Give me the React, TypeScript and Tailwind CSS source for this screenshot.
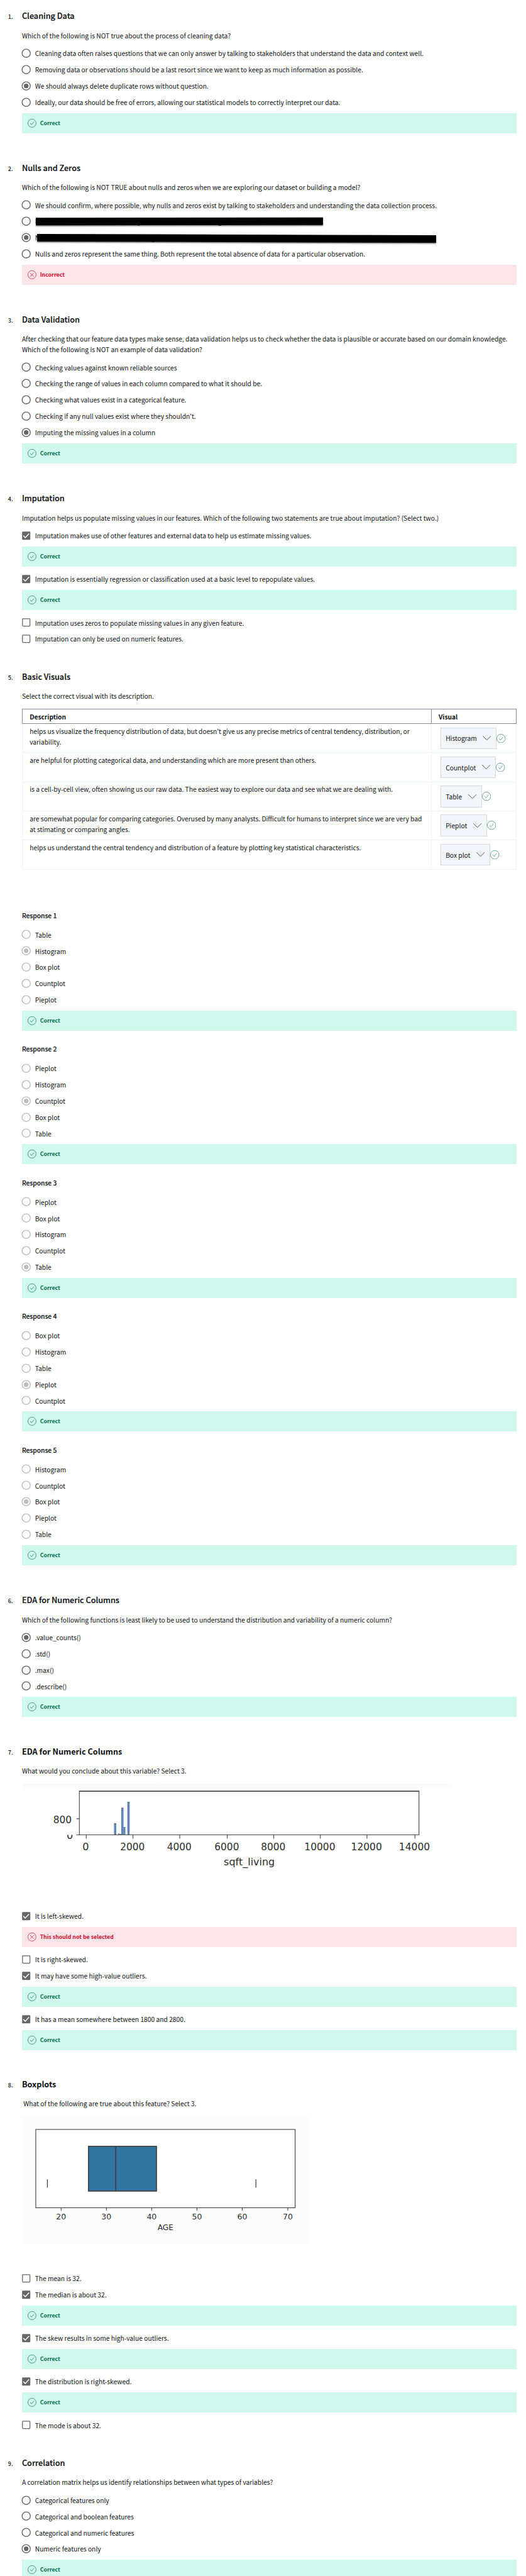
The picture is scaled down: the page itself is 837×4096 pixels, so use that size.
import type { ReactNode } from "react";

type Choice = { label: ReactNode; on?: boolean; verdict?: "ok" | string };

function Radio({ on, muted }: { on?: boolean; muted?: boolean }) {
  const color = muted ? "#bdbdbd" : "#666666";
  return (
    <svg viewBox="0 0 30 30" className="-ml-[1.3px] h-[15.4px] w-[15.4px] shrink-0">
      <circle cx="15" cy="15" r="12.7" fill="none" stroke={color} strokeWidth="2.7" />
      {on && <circle cx="15" cy="15" r="7.1" fill={color} />}
    </svg>
  );
}

function Checkbox({ on }: { on?: boolean }) {
  return (
    <svg viewBox="0 0 30 30" className="-ml-[1.3px] h-[15.4px] w-[15.4px] shrink-0">
      {on ? (
        <>
          <rect x="2.3" y="2.3" width="25.4" height="25.4" rx="2.5" fill="#666666" />
          <path d="M6.2 15.2 12 21.2 23.8 8.6" fill="none" stroke="#ffffff" strokeWidth="2.7" />
        </>
      ) : (
        <rect x="3.5" y="3.5" width="23" height="23" rx="1.6" fill="none" stroke="#666666" strokeWidth="2.5" />
      )}
    </svg>
  );
}

function RoundCheck({ className }: { className: string }) {
  return (
    <svg viewBox="0 0 28 28" className={className} fill="none" stroke="currentColor" strokeWidth="1.4">
      <circle cx="14" cy="14" r="13.2" />
      <path d="M8.3 14.1 12.4 18.8 20.2 9.6" />
    </svg>
  );
}

function RoundCross({ className }: { className: string }) {
  return (
    <svg viewBox="0 0 28 28" className={className} fill="none" stroke="currentColor" strokeWidth="1.4">
      <circle cx="14" cy="14" r="13.2" />
      <path d="M8 8 20 20M20 8 8 20" />
    </svg>
  );
}

function Banner({ kind }: { kind: string }) {
  const ok = kind === "ok";
  return (
    <div
      className={
        ok
          ? "mt-[4.4px] flex h-[31.8px] items-center bg-[#cff9ec] pl-[9.1px] text-[#087051]"
          : "mt-[4.4px] flex h-[31.8px] items-center bg-[#fbe5e8] pl-[9.1px] text-[#d30c2e]"
      }
    >
      {ok ? <RoundCheck className="h-[13.8px] w-[13.8px]" /> : <RoundCross className="h-[13.8px] w-[13.8px]" />}
      <span className="pl-[5.8px] text-[8.8px] font-bold leading-[14px]">{ok ? "Correct" : kind}</span>
    </div>
  );
}

function Choices({ items, box, muted }: { items: Choice[]; box?: boolean; muted?: boolean }) {
  return (
    <div>
      {items.map((c, i) => (
        <div key={i}>
          <div className="flex h-[25.85px] items-center">
            {box ? <Checkbox on={c.on} /> : <Radio on={c.on} muted={muted} />}
            <div className="pl-[6.7px] leading-[17px]">{c.label}</div>
          </div>
          {c.verdict && (
            <div className={i < items.length - 1 ? "pb-[7.1px]" : ""}>
              <Banner kind={c.verdict} />
            </div>
          )}
        </div>
      ))}
    </div>
  );
}

function Section({
  n,
  title,
  prompt,
  height,
  bold,
  inset,
  children,
}: {
  n: number;
  title: string;
  prompt: ReactNode;
  height: string;
  bold?: boolean;
  inset?: boolean;
  children: ReactNode;
}) {
  return (
    <section className={`${height} pt-[12.4px]`}>
      <div className="flex items-baseline leading-[26px]">
        <span className="w-[34.94px] shrink-0 pl-[12.8px] text-[9px] font-medium leading-none">{n}.</span>
        <h2
          className={
            bold ? "text-[12.67px] font-bold" : "text-[12.67px] font-medium [-webkit-text-stroke:0.2px_#0f1114]"
          }
        >
          {title}
        </h2>
      </div>
      <div className="ml-[34.94px] w-[787.1px]">
        <p className={inset ? "mt-[9.4px] pl-[2.3px] leading-[17px]" : "mt-[9.4px] leading-[17px]"}>{prompt}</p>
        {children}
      </div>
    </section>
  );
}

function BarOne() {
  return (
    <div className="relative h-[17px] w-[460px]">
      <span className="absolute left-0 top-0">N</span>
      <span className="absolute left-[163.5px] top-0">y</span>
      <span className="absolute left-[291px] top-0">g</span>
      <div className="absolute left-[1.7px] top-[2.4px] h-[11.6px] w-[457px] -rotate-[0.05deg] bg-black shadow-[0_1.5px_2px_rgba(0,0,0,0.55)]" />
    </div>
  );
}

function BarTwo() {
  return (
    <div className="relative h-[17px] w-[640px]">
      <span className="absolute left-0 top-0">N</span>
      <span className="absolute left-[184.5px] top-0">g</span>
      <div className="absolute left-[2.9px] top-[3.7px] h-[11.6px] w-[635.3px] rotate-[0.2deg] bg-black shadow-[0_1.5px_2px_rgba(0,0,0,0.55)]" />
    </div>
  );
}

const rows: { text: string[]; pick: string }[] = [
  {
    text: [
      "helps us visualize the frequency distribution of data, but doesn’t give us any precise metrics of central tendency, distribution, or",
      "variability.",
    ],
    pick: "Histogram",
  },
  { text: ["are helpful for plotting categorical data, and understanding which are more present than others."], pick: "Countplot" },
  {
    text: ["is a cell-by-cell view, often showing us our raw data. The easiest way to explore our data and see what we are dealing with."],
    pick: "Table",
  },
  {
    text: [
      "are somewhat popular for comparing categories. Overused by many analysts. Difficult for humans to interpret since we are very bad",
      "at stimating or comparing angles.",
    ],
    pick: "Pieplot",
  },
  { text: ["helps us understand the central tendency and distribution of a feature by plotting key statistical characteristics."], pick: "Box plot" },
];

function VisualTable() {
  return (
    <div className="mt-[11.7px]">
      <div className="flex h-[24px] items-center border border-[#868c9b] text-[10.2px] font-bold leading-[17px]">
        <div className="w-[649.8px] pl-[11.3px]">Description</div>
        <div className="flex h-full flex-1 items-center border-l border-[#868c9b] pl-[11.3px]">Visual</div>
      </div>
      {rows.map((r) => (
        <div key={r.pick} className="flex h-[46.33px] border-x border-b border-[#eef2f9]">
          <div className="w-[649.8px] pl-[11.3px] pt-[2.7px] leading-[17.3px]">
            {r.text.map((t) => (
              <div key={t}>{t}</div>
            ))}
          </div>
          <div className="flex flex-1 items-center border-l border-[#eef2f9] pl-[13.8px]">
            <div className="flex h-[34.4px] items-center border border-[#d3dce6] bg-[#f2f5fa] pl-[7.6px] pr-[8px]">
              <span className="leading-[17px]">{r.pick}</span>
              <svg viewBox="0 0 26 14" className="ml-[9.4px] h-[7.2px] w-[13.4px]" fill="none" stroke="#1f2328" strokeWidth="1.4">
                <path d="M.5 .6 13 13 25.5 .6" />
              </svg>
            </div>
            <RoundCheck className="h-[14.4px] w-[14.4px] text-[#2b8a5e]" />
          </div>
        </div>
      ))}
    </div>
  );
}

const responses: { options: string[]; pick: string }[] = [
  { options: ["Table", "Histogram", "Box plot", "Countplot", "Pieplot"], pick: "Histogram" },
  { options: ["Pieplot", "Histogram", "Countplot", "Box plot", "Table"], pick: "Countplot" },
  { options: ["Pieplot", "Box plot", "Histogram", "Countplot", "Table"], pick: "Table" },
  { options: ["Box plot", "Histogram", "Table", "Pieplot", "Countplot"], pick: "Pieplot" },
  { options: ["Histogram", "Countplot", "Box plot", "Pieplot", "Table"], pick: "Box plot" },
];

const sqftTicks = [
  { x: 267, label: "0", w: 20 },
  { x: 411.8, label: "2000", w: 76 },
  { x: 556.4, label: "4000", w: 76 },
  { x: 703.8, label: "6000", w: 76 },
  { x: 847.7, label: "8000", w: 76 },
  { x: 992, label: "10000", w: 96 },
  { x: 1136.5, label: "12000", w: 96 },
  { x: 1285, label: "14000", w: 96 },
];

const sqftBars = [
  { x: 353, w: 7, y: 5645 },
  { x: 366, w: 3, y: 5676 },
  { x: 369, w: 6, y: 5678.5 },
  { x: 375.4, w: 7, y: 5597 },
  { x: 382.2, w: 6, y: 5657 },
  { x: 394.4, w: 7, y: 5579 },
];

function SqftChart() {
  return (
    <svg viewBox="68 5522 1532 384.4" className="mt-[11.8px] block h-[197.5px] w-[787.1px] font-['DejaVu_Sans',sans-serif]" fill="#2c2c2c">
      <defs>
        <linearGradient id="haze" x1="0" x2="0" y1="0" y2="1">
          <stop offset="0" stopColor="#f9f9f9" />
          <stop offset="1" stopColor="#ffffff" />
        </linearGradient>
        <clipPath id="lower">
          <rect x="190" y="5680.6" width="46" height="30" />
        </clipPath>
      </defs>
      <rect x="68" y="5522" width="1330" height="24" fill="url(#haze)" />
      {sqftBars.map((b) => (
        <g key={b.x}>
          <rect x={b.x} y={b.y} width={b.w} height={5680.6 - b.y} fill="#5f87b6" />
          <rect x={b.x} y={b.y} width={b.w} height="2" fill="#6b7480" />
        </g>
      ))}
      <g stroke="#474747" strokeWidth="2.2" fill="none">
        <path d="M245.7 5545.7V5680.7M1297.5 5545.7V5680.7M236 5680.7H1298.5M237 5630.7H245.7" />
        <path d="M244.6 5545.7H1298.6" strokeWidth="3.6" />
        {sqftTicks.map((t) => (
          <path key={t.x} d={`M${t.x} 5681V5692.5`} />
        ))}
      </g>
      <g fontSize="32.5" textAnchor="middle">
        {sqftTicks.map((t) => (
          <text key={t.x} x={t.x - 1.5} y="5727.5" textLength={t.w} lengthAdjust="spacingAndGlyphs">
            {t.label}
          </text>
        ))}
        <text x="193.5" y="5644" textLength="57" lengthAdjust="spacingAndGlyphs">
          800
        </text>
        <text x="216" y="5692.5" textLength="20" lengthAdjust="spacingAndGlyphs" clipPath="url(#lower)">
          0
        </text>
        <text x="772" y="5775.5" textLength="158" lengthAdjust="spacingAndGlyphs">
          sqft_living
        </text>
      </g>
    </svg>
  );
}

const ageTicks = [
  { x: 189, label: "20" },
  { x: 329.3, label: "30" },
  { x: 469.6, label: "40" },
  { x: 609.8, label: "50" },
  { x: 750, label: "60" },
  { x: 891.3, label: "70" },
];

function AgeChart() {
  return (
    <svg viewBox="68 6551 1532 477" className="mt-[11.5px] block h-[245px] w-[787.1px] font-['DejaVu_Sans',sans-serif]" fill="#2c2c2c">
      <rect x="68" y="6551" width="888" height="396" fill="#fcfcfc" />
      <rect x="110.5" y="6591.8" width="803.5" height="242.4" fill="#ffffff" stroke="#3c3c3c" strokeWidth="2.1" />
      <g stroke="#3f3f3f" strokeWidth="3.2">
        <rect x="273.8" y="6644" width="210.6" height="138.6" fill="#3274a1" />
        <path d="M358.4 6644V6782.6" />
        <path d="M146.5 6746.4V6772M792.5 6746.4V6772" strokeWidth="2.4" />
      </g>
      {ageTicks.map((t) => (
        <path key={t.x} d={`M${t.x} 6834V6843`} stroke="#3c3c3c" strokeWidth="2" />
      ))}
      <g fontSize="24.3" textAnchor="middle">
        {ageTicks.map((t) => (
          <text key={t.x} x={t.x} y="6870">
            {t.label}
          </text>
        ))}
        <text x="512.3" y="6902.5" fontSize="23.8">
          AGE
        </text>
      </g>
    </svg>
  );
}

export default function App() {
  return (
    <main className="h-[4096px] w-[837px] overflow-hidden whitespace-nowrap bg-white font-['Noto_Sans_CJK_KR','Noto_Sans',sans-serif] text-[10.26px] text-[#0f1114]">
      <Section n={1} title="Cleaning Data" height="h-[241.2px]" prompt="Which of the following is NOT true about the process of cleaning data?">
        <div className="mt-[7.2px]">
          <Choices
            items={[
              { label: "Cleaning data often raises questions that we can only answer by talking to stakeholders that understand the data and context well." },
              { label: "Removing data or observations should be a last resort since we want to keep as much information as possible." },
              { label: "We should always delete duplicate rows without question.", on: true },
              { label: "Ideally, our data should be free of errors, allowing our statistical models to correctly interpret our data.", verdict: "ok" },
            ]}
          />
        </div>
      </Section>

      <Section
        n={2}
        title="Nulls and Zeros"
        height="h-[241px]"
        prompt="Which of the following is NOT TRUE about nulls and zeros when we are exploring our dataset or building a model?"
      >
        <div className="mt-[7.2px]">
          <Choices
            items={[
              { label: "We should confirm, where possible, why nulls and zeros exist by talking to stakeholders and understanding the data collection process." },
              { label: <BarOne /> },
              { label: <BarTwo />, on: true },
              { label: "Nulls and zeros represent the same thing. Both represent the total absence of data for a particular observation.", verdict: "Incorrect" },
            ]}
          />
        </div>
      </Section>

      <Section
        n={3}
        title="Data Validation"
        height="h-[284.7px]"
        prompt={
          <>
            After checking that our feature data types make sense, data validation helps us to check whether the data is plausible or accurate based on our domain knowledge.
            <br />
            Which of the following is NOT an example of data validation?
          </>
        }
      >
        <div className="mt-[7.2px]">
          <Choices
            items={[
              { label: "Checking values against known reliable sources" },
              { label: "Checking the range of values in each column compared to what it should be." },
              { label: "Checking what values exist in a categorical feature." },
              { label: "Checking if any null values exist where they shouldn’t." },
              { label: "Imputing the missing values in a column", on: true, verdict: "ok" },
            ]}
          />
        </div>
      </Section>

      <Section
        n={4}
        title="Imputation"
        height="h-[283.7px]"
        prompt="Imputation helps us populate missing values in our features. Which of the following two statements are true about imputation? (Select two.)"
      >
        <div className="mt-[7.2px]">
          <Choices
            box
            items={[
              { label: "Imputation makes use of other features and external data to help us estimate missing values.", on: true, verdict: "ok" },
              { label: "Imputation is essentially regression or classification used at a basic level to repopulate values.", on: true, verdict: "ok" },
              { label: "Imputation uses zeros to populate missing values in any given feature." },
              { label: "Imputation can only be used on numeric features." },
            ]}
          />
        </div>
      </Section>

      <Section n={5} title="Basic Visuals" height="h-[1468.2px]" prompt="Select the correct visual with its description.">
        <VisualTable />
        <div className="mt-[65.3px]">
          {responses.map((r, i) => (
            <div key={i} className="h-[212.5px]">
              <h3 className="mb-[9.3px] h-[16px] font-medium leading-[16px] [-webkit-text-stroke:0.15px_#0f1114]">Response {i + 1}</h3>
              <Choices muted items={r.options.map((o, k) => ({ label: o, on: o === r.pick, verdict: k === 4 ? "ok" : undefined }))} />
            </div>
          ))}
        </div>
      </Section>

      <Section
        n={6}
        title="EDA for Numeric Columns"
        height="h-[240.9px]"
        prompt="Which of the following functions is least likely to be used to understand the distribution and variability of a numeric column?"
      >
        <div className="mt-[7.2px]">
          <Choices
            items={[{ label: ".value_counts()", on: true }, { label: ".std()" }, { label: ".max()" }, { label: ".describe()", verdict: "ok" }]}
          />
        </div>
      </Section>

      <Section n={7} title="EDA for Numeric Columns" bold height="h-[529px]" prompt="What would you conclude about this variable? Select 3.">
        <SqftChart />
        <Choices
          box
          items={[
            { label: "It is left-skewed.", on: true, verdict: "This should not be selected" },
            { label: "It is right-skewed." },
            { label: "It may have some high-value outliers.", on: true, verdict: "ok" },
            { label: "It has a mean somewhere between 1800 and 2800.", on: true, verdict: "ok" },
          ]}
        />
      </Section>

      <Section n={8} title="Boxplots" bold inset height="h-[601.8px]" prompt="What of the following are true about this feature? Select 3.">
        <AgeChart />
        <Choices
          box
          items={[
            { label: "The mean is 32." },
            { label: "The median is about 32.", on: true, verdict: "ok" },
            { label: "The skew results in some high-value outliers.", on: true, verdict: "ok" },
            { label: "The distribution is right-skewed.", on: true, verdict: "ok" },
            { label: "The mode is about 32." },
          ]}
        />
      </Section>

      <Section n={9} title="Correlation" height="h-[215px]" prompt="A correlation matrix helps us identify relationships between what types of variables?">
        <div className="mt-[7.2px]">
          <Choices
            items={[
              { label: "Categorical features only" },
              { label: "Categorical and boolean features" },
              { label: "Categorical and numeric features" },
              { label: "Numeric features only", on: true, verdict: "ok" },
            ]}
          />
        </div>
      </Section>
    </main>
  );
}
